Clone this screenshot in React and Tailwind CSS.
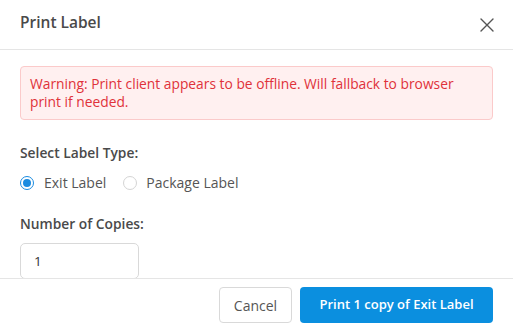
export default function App() {
  const font = { fontFamily: '"Open Sans", "Lato", sans-serif' };
  return (
    <div className="w-[513px] h-[331px] bg-white flex flex-col overflow-hidden" style={font}>
      <div className="h-[50px] shrink-0 flex items-center justify-between pl-5 pr-[18px] border-b border-[#e5e5e5]">
        <h1 className="text-[15.5px] font-semibold text-[#4a4a4a] -mt-[4px]">Print Label</h1>
        <button className="w-[16px] h-[16px] flex items-center justify-center text-[#555]">
          <svg width="14" height="14" viewBox="0 0 14 14" fill="none" stroke="currentColor" strokeWidth="1.4" strokeLinecap="round">
            <path d="M1 1L13 13M13 1L1 13" />
          </svg>
        </button>
      </div>
      <div className="flex-1 overflow-hidden px-5 pt-4">
        <div className="rounded border border-[#fbcaca] bg-[#fff0f0] pl-[9px] pr-[14px] py-2 text-[13.8px] leading-[18px] text-[#e0323a]">
          Warning: Print client appears to be offline. Will fallback to browser print if needed.
        </div>
        <div className="mt-6 text-[13.8px] font-semibold leading-[18px] text-[#4a4a4a]">Select Label Type:</div>
        <div className="mt-3 flex items-center text-[14px] text-[#555] leading-[18px]">
          <label className="flex items-center gap-[10px]">
            <span className="w-[14px] h-[14px] rounded-full border border-[#1a8be0] flex items-center justify-center">
              <span className="w-[8px] h-[8px] rounded-full bg-[#1a8be0]"></span>
            </span>
            <span>Exit Label</span>
          </label>
          <label className="flex items-center gap-[9px] ml-[17px]">
            <span className="w-[14px] h-[14px] rounded-full border border-[#d4d4d4]"></span>
            <span>Package Label</span>
          </label>
        </div>
        <div className="mt-[23px] text-[13.8px] font-semibold leading-[18px] text-[#4a4a4a]">Number of Copies:</div>
        <div className="mt-[10px] w-[119px] h-[36px] rounded-[5px] border border-[#d9d9d9] flex items-center px-[13px] text-[13.5px] text-[#333]">
          1
        </div>
      </div>
      <div className="h-[53px] shrink-0 border-t border-[#e5e5e5] flex items-center justify-end gap-2 px-5">
        <button className="h-[36px] w-[73px] rounded-[4px] border border-[#d9d9d9] bg-white text-[14px] text-[#555]">Cancel</button>
        <button className="h-[36px] w-[193px] whitespace-nowrap rounded-[4px] bg-[#0b8fdf] text-[13px] font-semibold text-white">Print 1 copy of Exit Label</button>
      </div>
    </div>
  );
}
